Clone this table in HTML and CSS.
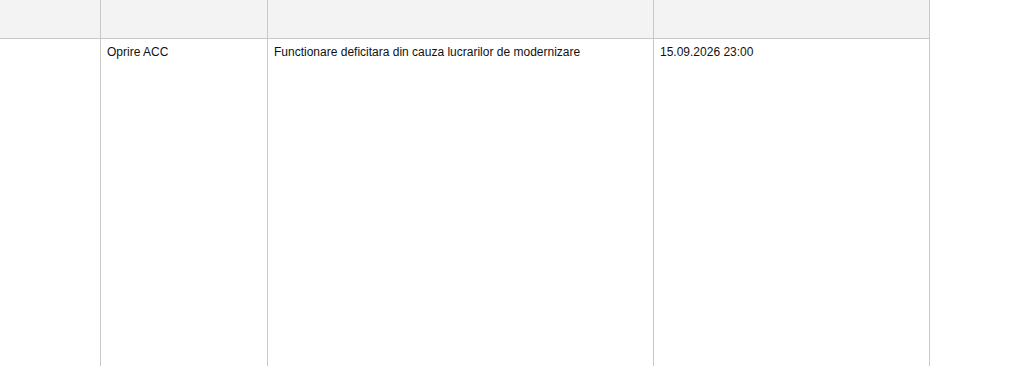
FILE: index.html
```html
<!DOCTYPE html>
<html lang="ro">
<head>
<meta charset="utf-8">
<title>Tabel</title>
<link rel="stylesheet" href="styles.css">
</head>
<body>
<div class="grid">
  <div class="cell head"></div>
  <div class="cell head"></div>
  <div class="cell head"></div>
  <div class="cell head"></div>
  <div class="cell body"></div>
  <div class="cell body">Oprire ACC</div>
  <div class="cell body">Functionare deficitara din cauza lucrarilor de modernizare</div>
  <div class="cell body">15.09.2026 23:00</div>
</div>
</body>
</html>
```
FILE: styles.css
```css
html, body {
  margin: 0;
  padding: 0;
  background: #ffffff;
  overflow: hidden;
}
.grid {
  display: grid;
  grid-template-columns: 101px 167px 386px 276px;
  grid-template-rows: 39px 340px;
  width: 930px;
  font-family: "Liberation Sans", Arial, sans-serif;
  font-size: 12px;
  color: #111111;
}
.cell {
  border-right: 1px solid #c8c8c8;
  padding: 6px 6px 5px;
  line-height: 14px;
  box-sizing: border-box;
}
.head {
  background: #f3f3f3;
  border-bottom: 1px solid #c8c8c8;
}
.cell:nth-child(1), .cell:nth-child(5) {
  padding-left: 0;
}
```
